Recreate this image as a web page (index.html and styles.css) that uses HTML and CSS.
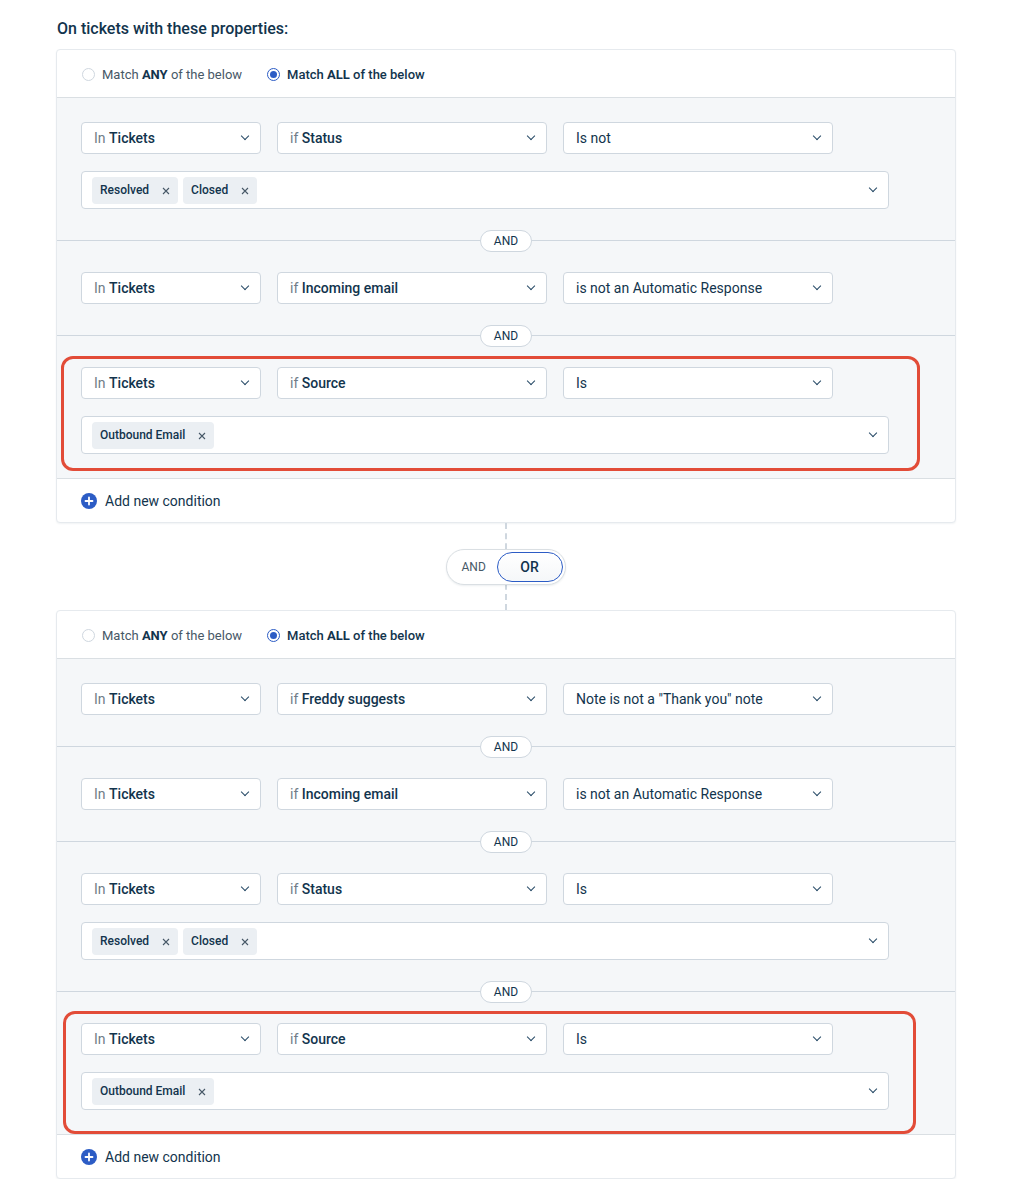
FILE: index.html
```html
<!DOCTYPE html>
<html>
<head>
<meta charset="utf-8">
<link rel="stylesheet" href="styles.css">
</head>
<body>
<div class="page">
  <h3 class="title">On tickets with these properties:</h3>

  <div class="card">
    <div class="card-head">
      <label class="radio"><span class="dot"></span><span>Match <b>ANY</b> of the below</span></label>
      <label class="radio on"><span class="dot"></span><span>Match <b>ALL</b> of the below</span></label>
    </div>
    <div class="card-body">
      <div class="section">
        <div class="row">
          <div class="sel s1"><span><i>In</i> <b>Tickets</b></span><span class="chev"></span></div>
          <div class="sel s2"><span><i>if</i> <b>Status</b></span><span class="chev"></span></div>
          <div class="sel s2"><span>Is not</span><span class="chev"></span></div>
        </div>
        <div class="tags">
          <span class="chip">Resolved<svg class="x" width="8" height="8" viewBox="0 0 8 8"><path d="M1 1l6 6M7 1L1 7"/></svg></span>
          <span class="chip">Closed<svg class="x" width="8" height="8" viewBox="0 0 8 8"><path d="M1 1l6 6M7 1L1 7"/></svg></span>
          <span class="chev"></span>
        </div>
      </div>
      <div class="sep"><span class="pill">AND</span></div>
      <div class="section">
        <div class="row">
          <div class="sel s1"><span><i>In</i> <b>Tickets</b></span><span class="chev"></span></div>
          <div class="sel s2"><span><i>if</i> <b>Incoming email</b></span><span class="chev"></span></div>
          <div class="sel s2"><span>is not an Automatic Response</span><span class="chev"></span></div>
        </div>
      </div>
      <div class="sep"><span class="pill">AND</span></div>
      <div class="section">
        <div class="hl hl-a">
          <div class="row">
            <div class="sel s1"><span><i>In</i> <b>Tickets</b></span><span class="chev"></span></div>
            <div class="sel s2"><span><i>if</i> <b>Source</b></span><span class="chev"></span></div>
            <div class="sel s2"><span>Is</span><span class="chev"></span></div>
          </div>
          <div class="tags">
            <span class="chip">Outbound Email<svg class="x" width="8" height="8" viewBox="0 0 8 8"><path d="M1 1l6 6M7 1L1 7"/></svg></span>
            <span class="chev"></span>
          </div>
        </div>
      </div>
    </div>
    <div class="add">
      <svg class="plus" width="16" height="16" viewBox="0 0 16 16"><circle cx="8" cy="8" r="8" fill="#2c5cc5"/><path d="M8 4.5v7M4.5 8h7" stroke="#fff" stroke-width="1.8" stroke-linecap="round"/></svg>
      <span>Add new condition</span>
    </div>
  </div>

  <div class="connector">
    <div class="toggle">
      <span class="t-and">AND</span>
      <span class="t-or">OR</span>
    </div>
  </div>

  <div class="card">
    <div class="card-head">
      <label class="radio"><span class="dot"></span><span>Match <b>ANY</b> of the below</span></label>
      <label class="radio on"><span class="dot"></span><span>Match <b>ALL</b> of the below</span></label>
    </div>
    <div class="card-body">
      <div class="section">
        <div class="row">
          <div class="sel s1"><span><i>In</i> <b>Tickets</b></span><span class="chev"></span></div>
          <div class="sel s2"><span><i>if</i> <b>Freddy suggests</b></span><span class="chev"></span></div>
          <div class="sel s2"><span>Note is not a "Thank you" note</span><span class="chev"></span></div>
        </div>
      </div>
      <div class="sep"><span class="pill">AND</span></div>
      <div class="section">
        <div class="row">
          <div class="sel s1"><span><i>In</i> <b>Tickets</b></span><span class="chev"></span></div>
          <div class="sel s2"><span><i>if</i> <b>Incoming email</b></span><span class="chev"></span></div>
          <div class="sel s2"><span>is not an Automatic Response</span><span class="chev"></span></div>
        </div>
      </div>
      <div class="sep"><span class="pill">AND</span></div>
      <div class="section">
        <div class="row">
          <div class="sel s1"><span><i>In</i> <b>Tickets</b></span><span class="chev"></span></div>
          <div class="sel s2"><span><i>if</i> <b>Status</b></span><span class="chev"></span></div>
          <div class="sel s2"><span>Is</span><span class="chev"></span></div>
        </div>
        <div class="tags">
          <span class="chip">Resolved<svg class="x" width="8" height="8" viewBox="0 0 8 8"><path d="M1 1l6 6M7 1L1 7"/></svg></span>
          <span class="chip">Closed<svg class="x" width="8" height="8" viewBox="0 0 8 8"><path d="M1 1l6 6M7 1L1 7"/></svg></span>
          <span class="chev"></span>
        </div>
      </div>
      <div class="sep"><span class="pill">AND</span></div>
      <div class="section">
        <div class="hl hl-b">
          <div class="row">
            <div class="sel s1"><span><i>In</i> <b>Tickets</b></span><span class="chev"></span></div>
            <div class="sel s2"><span><i>if</i> <b>Source</b></span><span class="chev"></span></div>
            <div class="sel s2"><span>Is</span><span class="chev"></span></div>
          </div>
          <div class="tags">
            <span class="chip">Outbound Email<svg class="x" width="8" height="8" viewBox="0 0 8 8"><path d="M1 1l6 6M7 1L1 7"/></svg></span>
            <span class="chev"></span>
          </div>
        </div>
      </div>
    </div>
    <div class="add">
      <svg class="plus" width="16" height="16" viewBox="0 0 16 16"><circle cx="8" cy="8" r="8" fill="#2c5cc5"/><path d="M8 4.5v7M4.5 8h7" stroke="#fff" stroke-width="1.8" stroke-linecap="round"/></svg>
      <span>Add new condition</span>
    </div>
  </div>
</div>
</body>
</html>
```

FILE: styles.css
```css
* { box-sizing: border-box; }

body {
  margin: 0;
  background: #fff;
  font-family: "Segoe UI", Roboto, "Noto Sans", sans-serif;
  color: #12344d;
}

.page {
  width: 900px;
  margin-left: 56px;
  padding-top: 18px;
}

.title {
  margin: 0 0 10px 1px;
  font-size: 16px;
  font-weight: 500;
  line-height: 21px;
  color: #12344d;
}

.card {
  border: 1px solid #e6eaee;
  border-radius: 4px;
  background: #fff;
  box-shadow: 0 1px 2px rgba(18, 52, 77, 0.06);
}

.card-head {
  height: 48px;
  display: flex;
  align-items: center;
  gap: 25px;
  padding: 1px 25px 0;
  border-bottom: 1px solid #dadfe3;
}

.radio {
  display: flex;
  align-items: center;
  gap: 7px;
  font-size: 13px;
  color: #475867;
}

.radio b { font-weight: 700; color: #12344d; }

.radio.on { color: #12344d; font-weight: 500; }

.dot {
  width: 13px;
  height: 13px;
  border-radius: 50%;
  border: 1px solid #cfd7df;
  background: #fff;
  display: inline-block;
  position: relative;
  flex: none;
}

.radio.on .dot {
  border-color: #2c5cc5;
}

.radio.on .dot::after {
  content: "";
  position: absolute;
  left: 2px;
  top: 2px;
  width: 7px;
  height: 7px;
  border-radius: 50%;
  background: #2c5cc5;
}

.card-body {
  background: #f5f7f9;
}

.section {
  padding: 24px;
}

.row {
  display: flex;
  gap: 16px;
}

.sel {
  height: 32px;
  border: 1px solid #cfd7df;
  border-radius: 4px;
  background: #fff;
  display: flex;
  align-items: center;
  justify-content: space-between;
  padding: 0 12px;
  font-size: 14px;
  color: #12344d;
  white-space: nowrap;
}

.sel i { font-style: normal; color: #6f7c87; }
.sel b { font-weight: 500; }

.s1 { width: 180px; }
.s2 { width: 270px; }

.chev {
  width: 6px;
  height: 6px;
  border-right: 1.5px solid #264966;
  border-bottom: 1.5px solid #264966;
  transform: rotate(45deg);
  margin-top: -4px;
  flex: none;
}

.tags {
  margin-top: 17px;
  width: 808px;
  height: 38px;
  border: 1px solid #cfd7df;
  border-radius: 4px;
  background: #fff;
  display: flex;
  align-items: center;
  gap: 5px;
  padding: 0 12px 0 10px;
}

.tags .chev { margin-left: auto; }

.chip {
  height: 27px;
  background: #ebeff3;
  border-radius: 4px;
  display: inline-flex;
  align-items: center;
  padding: 0 8px 0 8px;
  font-size: 12px;
  font-weight: 500;
  color: #12344d;
}

.chip .x {
  margin-left: 13px;
  margin-top: 2px;
  stroke: #475867;
  stroke-width: 1.1;
  fill: none;
}

.sep {
  height: 15px;
  position: relative;
  display: flex;
  align-items: center;
  justify-content: center;
}

.sep::before {
  content: "";
  position: absolute;
  left: 0;
  right: 0;
  top: 7px;
  border-top: 1px solid #cfd7df;
}

.pill {
  position: relative;
  width: 52px;
  height: 22px;
  border: 1px solid #cfd7df;
  border-radius: 11px;
  background: #fff;
  font-size: 12px;
  font-weight: 400;
  color: #12344d;
  display: flex;
  align-items: center;
  justify-content: center;
}

.hl {
  position: relative;
  width: 808px;
}

.hl::after {
  content: "";
  position: absolute;
  border: 3px solid #e24c38;
  border-radius: 12px;
  pointer-events: none;
}

.hl-a::after { top: -11px; left: -20px; right: -31px; bottom: -17px; }
.hl-b::after { top: -12px; left: -18px; right: -27px; bottom: -24px; }

.add {
  height: 44px;
  border-top: 1px solid #dadfe3;
  display: flex;
  align-items: center;
  gap: 8px;
  padding-left: 24px;
  font-size: 14px;
  color: #12344d;
}

.plus { flex: none; }

.connector {
  height: 87px;
  display: flex;
  align-items: center;
  justify-content: center;
  position: relative;
}

.connector::before {
  content: "";
  position: absolute;
  top: 0;
  bottom: 0;
  left: 449px;
  border-left: 2px dashed #cfd7df;
}

.toggle {
  position: relative;
  width: 120px;
  height: 36px;
  border: 1px solid #dadfe3;
  border-radius: 18px;
  background: #fff;
  display: flex;
  align-items: center;
  padding: 0 2px 0 15px;
  box-shadow: 0 1px 2px rgba(18, 52, 77, 0.08);
  margin-right: 1px;
}

.t-and {
  font-size: 12px;
  color: #475867;
  width: 35px;
}

.t-or {
  margin-left: auto;
  width: 66px;
  height: 30px;
  border: 1px solid #2c5cc5;
  border-radius: 15px;
  background: linear-gradient(#fff, #f5f7f9);
  display: flex;
  align-items: center;
  justify-content: center;
  font-size: 14px;
  font-weight: 500;
  color: #12344d;
}
```
